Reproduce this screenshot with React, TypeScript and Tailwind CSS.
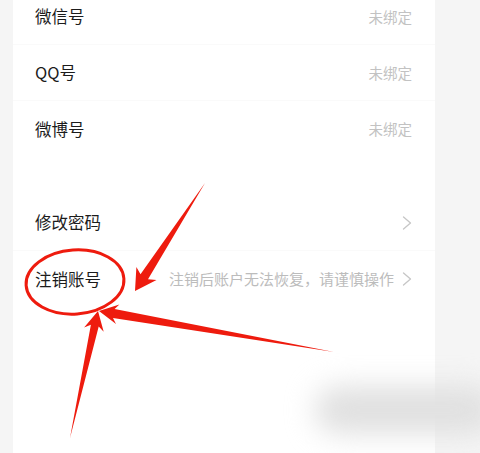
import React from 'react';

type Pt = [number, number];

// builds a tapered arrow polygon from tail to tip
const arrowPoints = (tail: Pt, tip: Pt, headLen: number, headHalf: number, neckHalf: number, sweep = 4) => {
  const dx = tip[0] - tail[0];
  const dy = tip[1] - tail[1];
  const len = Math.hypot(dx, dy);
  const ux = dx / len;
  const uy = dy / len;
  const nx = -uy;
  const ny = ux;
  const neck: Pt = [tip[0] - ux * headLen, tip[1] - uy * headLen];
  const barb: Pt = [tip[0] - ux * (headLen + sweep), tip[1] - uy * (headLen + sweep)];
  const pts: Pt[] = [
    tail,
    [neck[0] + nx * neckHalf, neck[1] + ny * neckHalf],
    [barb[0] + nx * headHalf, barb[1] + ny * headHalf],
    tip,
    [barb[0] - nx * headHalf, barb[1] - ny * headHalf],
    [neck[0] - nx * neckHalf, neck[1] - ny * neckHalf],
  ];
  return pts.map((p) => `${p[0].toFixed(1)},${p[1].toFixed(1)}`).join(' ');
};

const Chevron = () => (
  <svg width="10" height="14" viewBox="0 0 10 14" className="shrink-0">
    <polyline points="1.5,1 8.5,7 1.5,13" fill="none" stroke="#c6c6c6" strokeWidth="1.3" strokeLinejoin="round" strokeLinecap="round" />
  </svg>
);

type RowProps = {
  label: string;
  value?: string;
  arrow?: boolean;
  divider?: boolean;
};

const Row = ({ label, value, arrow, divider = true }: RowProps) => (
  <div className={`flex h-[56px] shrink-0 items-center justify-between pl-[22px] pr-[23px] ${divider ? 'border-b border-[#fafafa]' : ''}`}>
    <span className="text-[16.5px] text-[#1c1c1c]">{label}</span>
    <div className="flex items-center gap-[8px]">
      {value && <span className={`${arrow ? 'text-[15px] text-[#bcbcbc]' : 'text-[14.5px] text-[#c2c2c2]'}`}>{value}</span>}
      {arrow && <Chevron />}
    </div>
  </div>
);

export default function App() {
  const red = '#ee1b0e';
  return (
    <div
      className="relative h-[453px] w-[480px] overflow-hidden bg-[#f5f5f5]"
      style={{ fontFamily: '"Noto Sans CJK SC", "Noto Sans", sans-serif' }}
    >
      <div className="ml-[13px] flex h-full w-[422px] flex-col bg-white">
        <div className="-mt-[11px] flex flex-col">
          <Row label="微信号" value="未绑定" />
          <Row label="QQ号" value="未绑定" />
          <Row label="微博号" value="未绑定" divider={false} />
          <div className="h-[38px] shrink-0" />
          <Row label="修改密码" arrow />
          <Row label="注销账号" value="注销后账户无法恢复，请谨慎操作" arrow divider={false} />
        </div>
      </div>

      {/* blurred watermark */}
      <div className="pointer-events-none absolute left-[315px] top-[386px] h-[48px] w-[180px] rounded-full bg-[#e0e0e0] blur-[14px]" />

      {/* annotations */}
      <svg className="pointer-events-none absolute left-0 top-0" width="480" height="453" viewBox="0 0 480 453">
        <ellipse cx="75" cy="282" rx="49" ry="32" fill="none" stroke={red} strokeWidth="3" transform="rotate(-4 75 282)" />
        <polygon points={arrowPoints([205, 183], [135, 291], 17, 12, 4.5, 4)} fill={red} />
        <polygon points={arrowPoints([334, 352], [99, 311], 15, 10, 4.5, 4)} fill={red} />
        <polygon points={arrowPoints([70, 438], [98, 311], 15, 10, 4, 4)} fill={red} />
      </svg>
    </div>
  );
}
